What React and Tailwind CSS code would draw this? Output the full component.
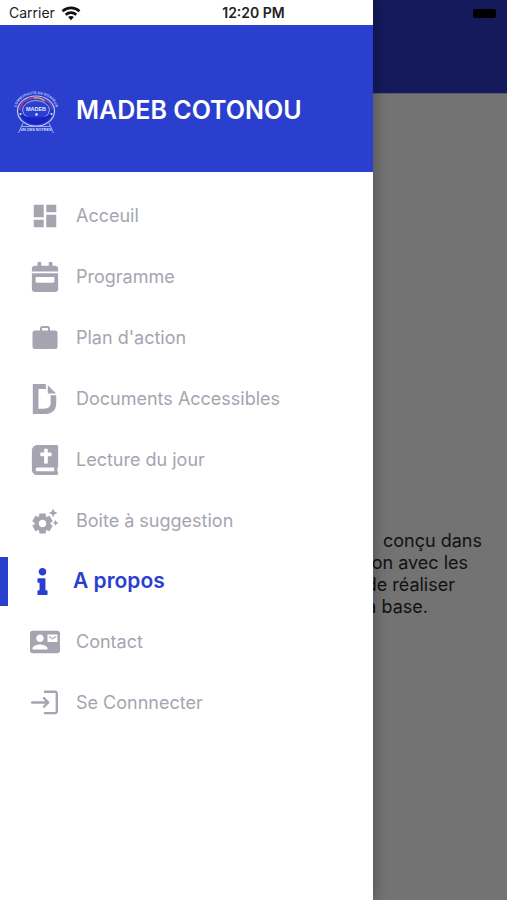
import React from "react";
import {
  MdDashboard,
  MdSettingsSuggest,
  MdContactMail,
} from "react-icons/md";
import { FaCalendarWeek, FaDochub, FaBible, FaInfo } from "react-icons/fa";

function LoginIcon({ className }) {
  return (
    <svg viewBox="0 0 28 28" className={className} fill="none" stroke="currentColor" strokeWidth="2.2" strokeLinecap="round" strokeLinejoin="round">
      <path d="M14 3.500h9.500a1.500 1.500 0 0 1 1.500 1.500v17a1.500 1.500 0 0 1-1.500 1.500H14" />
      <path d="M2 13.500H16.500" />
      <path d="M13 9.500l4 4-4 4" />
    </svg>
  );
}

function BriefcaseIcon({ className }) {
  return (
    <svg viewBox="0 0 30 30" className={className} fill="currentColor">
      <rect x="2.500" y="7.500" width="25" height="18.500" rx="2.500" />
      <path d="M11 8V5.500a1.500 1.500 0 0 1 1.500-1.500h5A1.500 1.500 0 0 1 19 5.500V8" fill="none" stroke="currentColor" strokeWidth="2" />
    </svg>
  );
}

const items = [
  { label: "Acceuil", Icon: MdDashboard, size: "size-[30px]" },
  { label: "Programme", Icon: FaCalendarWeek, size: "size-[30px]" },
  { label: "Plan d'action", Icon: BriefcaseIcon, size: "size-[30px]" },
  { label: "Documents Accessibles", Icon: FaDochub, size: "size-[30px]" },
  { label: "Lecture du jour", Icon: FaBible, size: "size-[30px]" },
  { label: "Boite à suggestion", Icon: MdSettingsSuggest, size: "size-[30px]" },
  { label: "A propos", Icon: FaInfo, size: "size-[27px]", active: true },
  { label: "Contact", Icon: MdContactMail, size: "size-[30px]" },
  { label: "Se Connnecter", Icon: LoginIcon, size: "size-[30px]" },
];

function Logo() {
  return (
    <svg viewBox="0 0 44 46" className="h-[46px] w-11 shrink-0" role="img" aria-label="MADEB">
      <defs>
        <path id="logo-arc" d="M2.500 19C6 1.500 38 1.500 41.500 19" />
      </defs>
      <text className="font-bold" fontSize="3.600" fill="#bcc5f6" fontFamily="Liberation Sans, sans-serif">
        <textPath href="#logo-arc" startOffset="50%" textAnchor="middle">COMMUNAUTE DE BONHEUR</textPath>
      </text>
      <ellipse cx="22" cy="23" rx="18.500" ry="15" fill="#2334bd" stroke="#c4ccf8" strokeWidth="1.200" />
      <path d="M6 22c0-7 7-12 16-12" fill="none" stroke="#a03d91" strokeWidth="1.800" />
      <path d="M22 10c9 0 16 5 16 11" fill="none" stroke="#7446b5" strokeWidth="1.800" />
      <path d="M20 10c4-.5 8 .5 10.500 3" fill="none" stroke="#e7a85e" strokeWidth="1.300" />
      <ellipse cx="22" cy="22" rx="13.500" ry="9.500" fill="#2b3fce" stroke="#a5b0f2" strokeWidth="1" />
      <text x="22" y="22.500" textAnchor="middle" className="font-bold" fontSize="5.500" fill="#e5e9ff" fontFamily="Liberation Sans, sans-serif">MADEB</text>
      <path d="M7 27q15 5 30 0q-4 9-15 9.500q-11-.5-15-9.500z" fill="#1723c4" />
      <circle cx="22.500" cy="26.500" r="1.300" fill="#e5e9ff" />
      <circle cx="6.500" cy="26" r="1.100" fill="#dce2ff" />
      <circle cx="37.500" cy="26" r="1.100" fill="#dce2ff" />
      <path d="M9 35l-4.500 10M35 35l4.500 10M7.500 38.500h29" fill="none" stroke="#a9b4f2" strokeWidth="0.900" />
      <text x="22" y="43" textAnchor="middle" className="font-bold" fontSize="3.800" fill="#d5dcff" fontFamily="Liberation Sans, sans-serif">UN DES NOTRES</text>
    </svg>
  );
}

function MenuItem({ label, Icon, size, active }) {
  if (active) {
    return (
      <li className="flex h-[60px] items-center">
        <a href="#" aria-current="page" className="flex h-[49px] w-full items-center border-l-8 border-[#2b3fce] text-[#2b3fce]">
          <span className="flex w-[65px] justify-center pl-1">
            <Icon className={size} />
          </span>
          <span className="text-[21px] font-semibold">{label}</span>
        </a>
      </li>
    );
  }
  return (
    <li className="h-[61px]">
      <a href="#" className="flex h-full items-center pl-7 text-[#a4a5b1]">
        <span className="flex w-12 justify-center pr-[15px]">
          <Icon className={`${size} shrink-0`} />
        </span>
        <span className="text-lg">{label}</span>
      </a>
    </li>
  );
}

function StatusBar() {
  return (
    <div className="absolute inset-x-0 top-0 z-20 grid h-[26px] grid-cols-3 items-center px-[9px] text-sm text-[#222]">
      <span className="flex items-center gap-1.5">
        Carrier
        <svg viewBox="0 0 20 15" className="w-5" fill="none" stroke="#111" strokeWidth="2.600">
          <path d="M1.500 5.200C6.300.800 13.700.800 18.500 5.200" />
          <path d="M4.700 8.700c3-2.800 7.600-2.800 10.600 0" />
          <path d="M10 14.200l-2.900-3.100c1.700-1.500 4.100-1.500 5.800 0z" fill="#111" stroke="none" />
        </svg>
      </span>
      <span className="text-center font-semibold">12:20 PM</span>
      <span className="mr-0.5 h-[9px] w-[23px] justify-self-end rounded-[2px] bg-black" />
    </div>
  );
}

export default function App() {
  return (
    <div className="relative flex min-h-screen overflow-hidden bg-[#737373] font-['Inter','Liberation_Sans',sans-serif]">
      <aside className="z-10 w-[73.5%] shrink-0 bg-white pt-[25px] shadow-[0_0_14px_rgba(0,0,0,0.35)]">
        <header className="flex h-[147px] items-center gap-[18px] bg-[#2b3fce] pt-6 pl-3.5">
          <Logo />
          <h1 className="text-[25px] font-semibold whitespace-nowrap text-white">MADEB COTONOU</h1>
        </header>
        <nav className="pt-[13px]">
          <ul>
            {items.map((item) => (
              <MenuItem key={item.label} {...item} />
            ))}
          </ul>
        </nav>
      </aside>
      <main className="min-w-0 flex-1 overflow-hidden">
        <div className="h-[94px] border-b border-[#555a70] bg-[#141a5c]" />
        <div className="flex flex-col items-end pt-[436px] text-lg leading-[22px] whitespace-nowrap text-[#111]">
          <p className="pr-[25px]">conçu dans</p>
          <p className="pr-[39px]">on avec les</p>
          <p className="pr-[52px]">de réaliser</p>
          <p className="pr-[79px]">la base.</p>
        </div>
      </main>
      <StatusBar />
    </div>
  );
}
